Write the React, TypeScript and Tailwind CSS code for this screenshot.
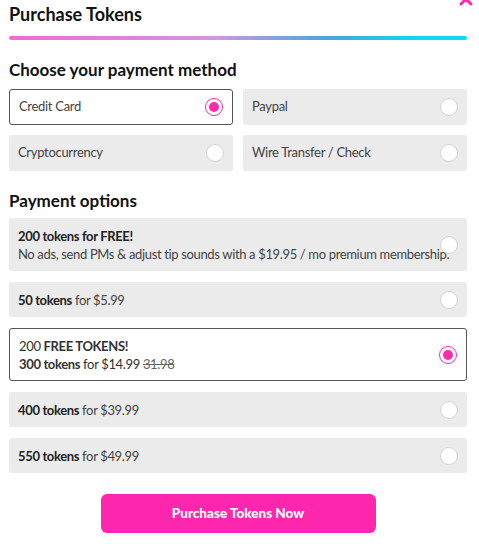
import React, { useState } from 'react';

interface Method {
  id: string;
  label: string;
}

interface TokenOption {
  id: string;
  lines: React.ReactNode[];
}

const methods: Method[] = [
  { id: 'card', label: 'Credit Card' },
  { id: 'paypal', label: 'Paypal' },
  { id: 'crypto', label: 'Cryptocurrency' },
  { id: 'wire', label: 'Wire Transfer / Check' },
];

const options: TokenOption[] = [
  {
    id: 'free',
    lines: [
      <span className="font-bold text-[#222]">200 tokens for FREE!</span>,
      <span>No ads, send PMs &amp; adjust tip sounds with a $19.95 / mo premium membership.</span>,
    ],
  },
  {
    id: '50',
    lines: [
      <span>
        <b className="font-bold text-[#222]">50 tokens</b> for $5.99
      </span>,
    ],
  },
  {
    id: '300',
    lines: [
      <span>
        200 <b className="font-bold">FREE TOKENS!</b>
      </span>,
      <span>
        <b className="font-bold">300 tokens</b> for $14.99 <s className="text-[#666]">31.98</s>
      </span>,
    ],
  },
  {
    id: '400',
    lines: [
      <span>
        <b className="font-bold text-[#222]">400 tokens</b> for $39.99
      </span>,
    ],
  },
  {
    id: '550',
    lines: [
      <span>
        <b className="font-bold text-[#222]">550 tokens</b> for $49.99
      </span>,
    ],
  },
];

const Radio = ({ checked }: { checked: boolean }) =>
  checked ? (
    <span className="flex h-[18px] w-[18px] items-center justify-center rounded-full border border-[#ff2aa8] bg-white">
      <span className="h-[10px] w-[10px] rounded-full bg-[#ff2aa8]" />
    </span>
  ) : (
    <span className="block h-[18px] w-[18px] rounded-full border border-[#d4d4d4] bg-white" />
  );

const App = () => {
  const [method, setMethod] = useState('card');
  const [option, setOption] = useState('300');

  return (
    <div className="relative min-h-[544px] bg-white pl-[9px] pr-[12px] text-[13px] text-[#444] font-['Lato',sans-serif]">
      {/* close icon, mostly cut off at the top */}
      <svg
        className="absolute right-[5px] top-[-9px]"
        width="16"
        height="16"
        viewBox="0 0 16 16"
        fill="none"
        stroke="#ff2aa8"
        strokeWidth="3"
        strokeLinecap="round"
      >
        <path d="M3 3l10 10M13 3L3 13" />
      </svg>

      <h1 className="pt-[2px] text-[18px] font-bold leading-[24px] text-[#111]">Purchase Tokens</h1>
      <div className="mt-[10px] h-[4px] rounded-full bg-[linear-gradient(90deg,#f26acd_0%,#cc9bd9_45%,#4aa5db_70%,#0ad9f5_90%,#0ad9f5_100%)]" />

      <h2 className="mt-[20px] text-[17px] font-bold leading-[20px] text-[#111]">Choose your payment method</h2>
      <div className="mt-[9px] grid grid-cols-2 gap-x-[10px] gap-y-[10px] tracking-[-0.3px]">
        {methods.map((m) => {
          const on = m.id === method;
          return (
            <button
              key={m.id}
              onClick={() => setMethod(m.id)}
              className={`flex h-[36px] items-center justify-between rounded-[3px] pl-[9px] pr-[9px] text-left ${
                on ? 'border border-[#555] bg-white' : 'bg-[#ebebeb]'
              }`}
            >
              <span>{m.label}</span>
              <Radio checked={on} />
            </button>
          );
        })}
      </div>

      <h2 className="mt-[20px] text-[17px] font-bold leading-[20px] text-[#111]">Payment options</h2>
      <div className="mt-[7px] flex flex-col gap-[11px] tracking-[-0.35px]">
        {options.map((o) => {
          const on = o.id === option;
          return (
            <button
              key={o.id}
              onClick={() => setOption(o.id)}
              className={`relative flex flex-col justify-center rounded-[3px] pl-[9px] text-left leading-[18px] ${
                o.lines.length > 1 ? 'h-[53px]' : 'h-[35px]'
              } ${on ? 'border border-[#555] bg-white text-[#333]' : 'bg-[#ebebeb]'}`}
            >
              {o.lines.map((l, i) => (
                <span key={i} className="whitespace-nowrap">
                  {l}
                </span>
              ))}
              <span className="absolute right-[9px] top-1/2 -translate-y-1/2">
                <Radio checked={on} />
              </span>
            </button>
          );
        })}
      </div>

      <div className="mt-[21px] flex justify-center">
        <button className="h-[39px] w-[275px] rounded-[6px] bg-[#fe27ad] text-[13.5px] font-black text-white">
          Purchase Tokens Now
        </button>
      </div>
    </div>
  );
};

export default App;
